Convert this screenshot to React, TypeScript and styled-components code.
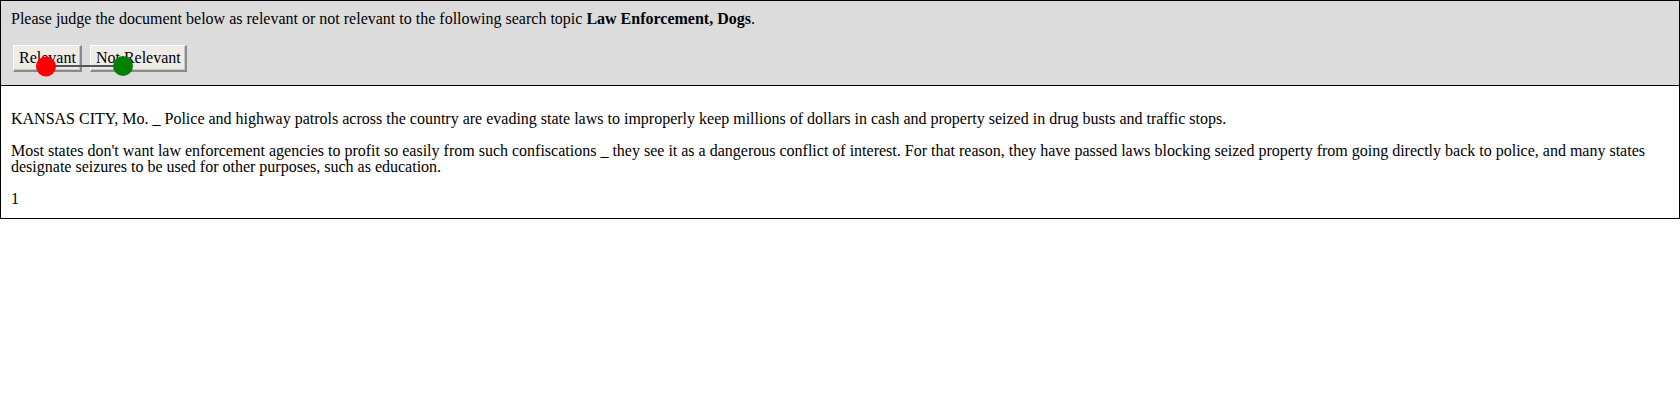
import React from "react";
import styled, { createGlobalStyle } from "styled-components";

const Global = createGlobalStyle`
  html, body { margin: 0; padding: 0; background: #ffffff; }
  body {
    font-family: "Liberation Serif", "Times New Roman", serif;
    font-size: 16px;
    color: #000;
  }
`;

const Page = styled.div`
  width: 1680px;
  box-sizing: border-box;
`;

const Header = styled.div`
  position: relative;
  background: #dcdcdc;
  border: 1px solid #000;
  padding: 9px 10px 13px 10px;
`;

const Prompt = styled.div`
  line-height: 18px;
`;

const ButtonRow = styled.div`
  display: flex;
  gap: 8px;
  margin-top: 17px;
  padding-left: 2px;
`;

const JudgeButton = styled.button`
  height: 27px;
  padding: 0 4px 0 5px;
  font-family: "Liberation Serif", "Times New Roman", serif;
  font-size: 16px;
  color: #000;
  background: #efece7;
  border-style: solid;
  border-width: 1px 2px 2px 1px;
  border-color: #ffffff #8a8a8a #8a8a8a #ffffff;
  box-shadow: inset -1px -1px 0 #c8c5c0;
  line-height: 1;
  cursor: pointer;
`;

const Overlay = styled.svg`
  position: absolute;
  left: 0;
  top: 0;
  pointer-events: none;
  overflow: visible;
`;

const Body = styled.div`
  border: 1px solid #000;
  border-top: none;
  padding: 9px 10px 11px 10px;
`;

const Para = styled.p`
  margin: 16px 0 0 0;
  line-height: 16px;
`;

export default function App() {
  return (
    <>
      <Global />
      <Page>
        <Header>
          <Prompt>
            Please judge the document below as relevant or not relevant to the
            following search topic <b>Law Enforcement, Dogs</b>.
          </Prompt>
          <ButtonRow>
            <JudgeButton>Relevant</JudgeButton>
            <JudgeButton>Not Relevant</JudgeButton>
          </ButtonRow>
          <Overlay width="1680" height="86" viewBox="0 0 1680 86">
            <line x1="45" y1="65" x2="122" y2="65" stroke="#555" strokeWidth="2" />
            <circle cx="45" cy="65.5" r="10" fill="#ff0000" />
            <circle cx="122" cy="65" r="10" fill="#008000" />
          </Overlay>
        </Header>
        <Body>
          <Para>
            KANSAS CITY, Mo. _ Police and highway patrols across the country are
            evading state laws to improperly keep millions of dollars in cash and
            property seized in drug busts and traffic stops.
          </Para>
          <Para>
            Most states don't want law enforcement agencies to profit so easily
            from such confiscations _ they see it as a dangerous conflict of
            interest. For that reason, they have passed laws blocking seized
            property from going directly back to police, and many states
            designate seizures to be used for other purposes, such as education.
          </Para>
          <Para>1</Para>
        </Body>
      </Page>
    </>
  );
}
